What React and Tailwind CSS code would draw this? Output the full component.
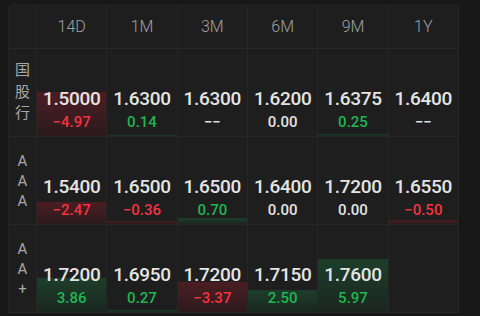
import React from 'react'

const headers = ['14D', '1M', '3M', '6M', '9M', '1Y']

const rows = [
  {
    label: ['国', '股', '行'],
    cells: [
      { v: '1.5000', c: -4.97 },
      { v: '1.6300', c: 0.14 },
      { v: '1.6300', c: null },
      { v: '1.6200', c: 0 },
      { v: '1.6375', c: 0.25 },
      { v: '1.6400', c: null },
    ],
  },
  {
    label: ['A', 'A', 'A'],
    cells: [
      { v: '1.5400', c: -2.47 },
      { v: '1.6500', c: -0.36 },
      { v: '1.6500', c: 0.7 },
      { v: '1.6400', c: 0 },
      { v: '1.7200', c: 0 },
      { v: '1.6550', c: -0.5 },
    ],
  },
  {
    label: ['A', 'A', '+'],
    cells: [
      { v: '1.7200', c: 3.86 },
      { v: '1.6950', c: 0.27 },
      { v: '1.7200', c: -3.37 },
      { v: '1.7150', c: 2.5 },
      { v: '1.7600', c: 5.97 },
      null,
    ],
  },
]

const fmt = (c) => {
  if (c === null) return '\u2212\u2212'
  if (c < 0) return '\u2212' + Math.abs(c).toFixed(2)
  return c.toFixed(2)
}

const Cell = ({ cell }) => {
  if (!cell) return <div className="relative border-r border-[#262626]" />
  const { v, c } = cell
  const up = c !== null && c > 0
  const down = c !== null && c < 0
  // bar height: 10 units fills the row (88px)
  const barH = c ? Math.abs(c) * 8.8 : 0
  return (
    <div className="relative flex flex-col items-center justify-end pb-[4px] border-r border-[#262626]">
      {up && (
        <div
          className="absolute left-0 right-0 bottom-0 bg-gradient-to-b from-[#1c3f2a] to-[#1a2620]"
          style={{ height: barH }}
        />
      )}
      {down && (
        <div
          className="absolute left-0 right-0 bottom-0 bg-gradient-to-b from-[#4c1d23] to-[#2b1a1d]"
          style={{ height: barH }}
        />
      )}
      <span className="relative text-[19px] leading-[22px] font-medium tracking-[-0.3px] text-[#e4e4e4]">{v}</span>
      <span
        className={
          'relative mt-[3px] text-[15px] leading-[19px] font-medium ' +
          (up ? 'text-[#1fb552]' : down ? 'text-[#f4333f]' : 'text-[#e4e4e4]')
        }
      >
        {fmt(c)}
      </span>
    </div>
  )
}

const App = () => {
  return (
    <div className="w-[480px] h-[316px] overflow-hidden bg-[#181818] pl-2 pt-1 font-['Roboto','Noto_Sans_CJK_SC',sans-serif]">
      <div className="w-[451px] bg-[#1e1e1e] rounded-t-md border-t border-l border-[#232323]">
        {/* Header */}
        <div className="grid grid-cols-[28px_repeat(6,1fr)] h-[44px] border-b border-[#282828]">
          <div className="border-r border-[#262626]" />
          {headers.map((h) => (
            <div key={h} className="flex items-center justify-center text-[16px] font-light text-[#a0a0a0] border-r border-[#262626]">
              {h}
            </div>
          ))}
        </div>

        {/* Rows */}
        {rows.map((row, i) => (
          <div key={i} className="grid grid-cols-[28px_repeat(6,1fr)] h-[88px] border-b border-[#262626]">
            <div className="flex flex-col items-center justify-center border-r border-[#262626] text-[15px] text-[#a8a8a8]">
              {row.label.map((ch, j) => (
                <span key={j} className={i === 0 ? 'leading-[21.5px]' : 'leading-[20px]'}>{ch}</span>
              ))}
            </div>
            {row.cells.map((cell, j) => (
              <Cell key={j} cell={cell} />
            ))}
          </div>
        ))}
      </div>
    </div>
  )
}

export default App
